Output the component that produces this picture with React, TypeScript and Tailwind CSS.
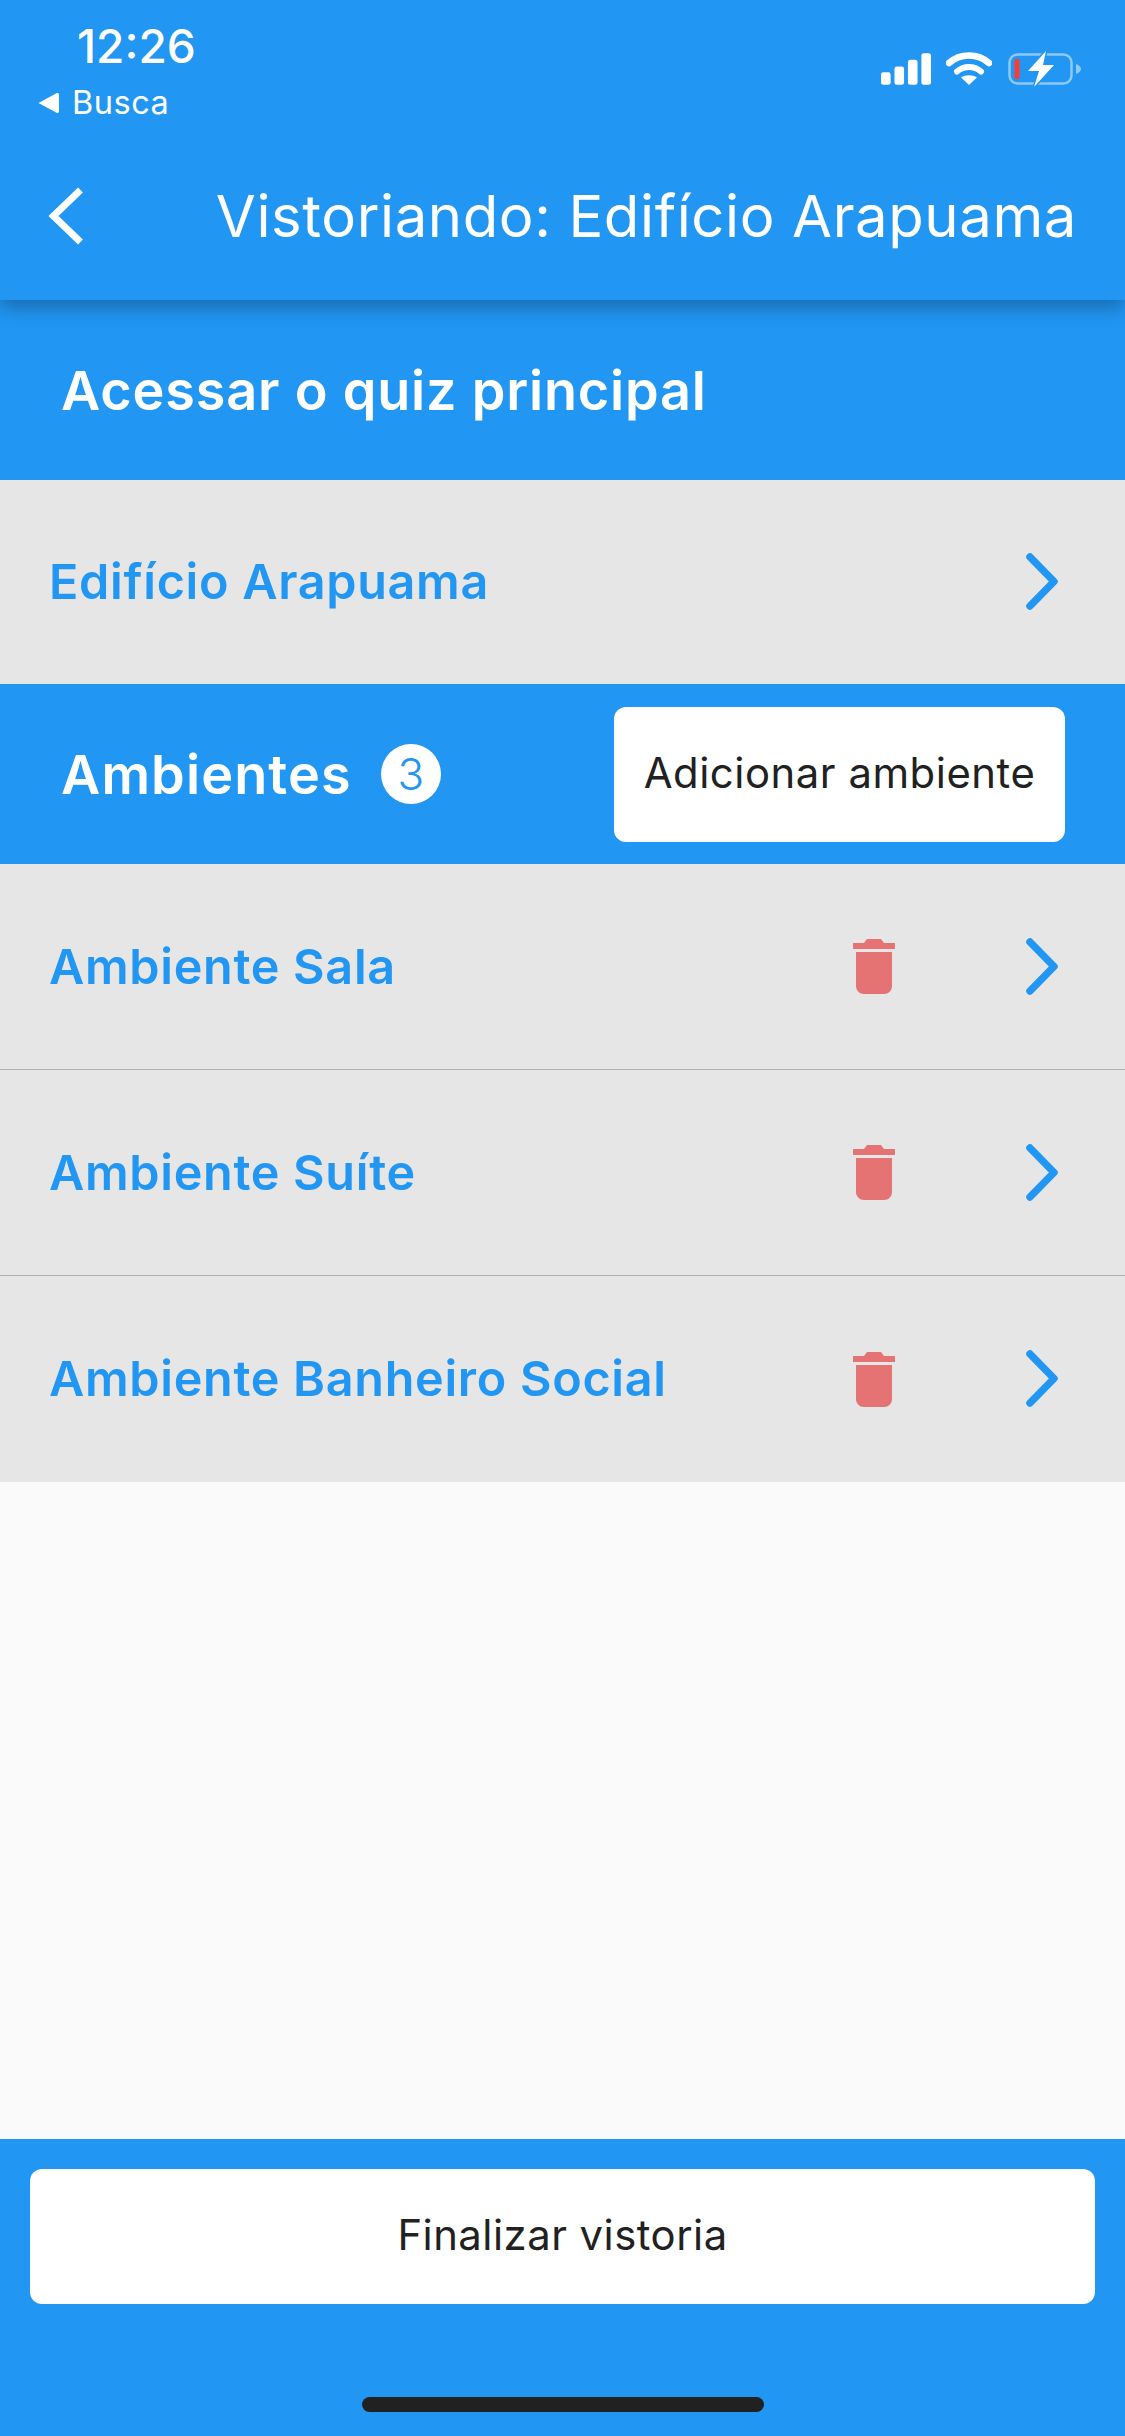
import React from "react";

const Chevron = () => (
  <svg width="36" height="58" viewBox="0 0 36 58" fill="none">
    <path d="M5 4 L29 28.5 L5 53" stroke="#2196f3" strokeWidth="7.5" strokeLinecap="round" strokeLinejoin="round" />
  </svg>
);

const Trash = () => (
  <svg width="42" height="55" viewBox="0 0 42 55" fill="#e57373">
    <path d="M0 4 H11 L14 0 H28 L31 4 H42 V10 H0 Z" />
    <path d="M3 13 H39 V47 C39 51.5 35.5 55 31 55 H11 C6.5 55 3 51.5 3 47 Z" />
  </svg>
);

const Row = ({ label, trash, line, short }: { label: string; trash?: boolean; line?: boolean; short?: boolean }) => (
  <div className={`flex items-center bg-[#e6e6e6] pl-[49px] pr-[64px] ${short ? "h-[204px]" : "h-[206px]"} ${line ? "border-b-[1.5px] border-[#b0b0b0]" : ""}`}>
    <span className="flex-1 pt-[1px] text-[48.5px] font-semibold tracking-[0.7px] text-[#2196f3]">{label}</span>
    {trash && (
      <span className="mr-[130px] flex">
        <Trash />
      </span>
    )}
    <Chevron />
  </div>
);

export default function App() {
  return (
    <div className="flex h-[2436px] w-[1125px] flex-col overflow-hidden bg-[#fafafa] font-['Inter',sans-serif]">
      <header className="relative z-10 h-[300px] bg-[#2196f3] text-white shadow-[0_8px_18px_rgba(0,0,0,0.28)]">
        <div className="flex justify-between">
          <div className="pl-[38px] pt-[20px]">
            <div className="pl-[39px] text-[46px] leading-[53px] font-medium">12:26</div>
            <div className="mt-[10px] flex items-center gap-[12px] text-[32.5px] leading-[40px]">
              <svg width="22" height="22" viewBox="0 0 22 22" fill="white">
                <path d="M0.5 11 L19 1 Q21 0.5 21 3 V19 Q21 21.5 19 21 Z" />
              </svg>
              <span className="tracking-[0.5px]">Busca</span>
            </div>
          </div>
          <div className="flex items-start gap-[15px] pt-[53px] pr-[43px]">
            <svg width="50" height="32" viewBox="0 0 52 33" fill="white">
              <rect x="0" y="20" width="10" height="13" rx="2.5" />
              <rect x="14" y="14" width="10" height="19" rx="2.5" />
              <rect x="28" y="7" width="10" height="26" rx="2.5" />
              <rect x="42" y="0" width="10" height="33" rx="2.5" />
            </svg>
            <svg width="46" height="33" viewBox="0 0 46 33" fill="none" className="-mt-[1px]">
              <path d="M3 11 C14 1 32 1 43 11" stroke="white" strokeWidth="6.5" strokeLinecap="round" />
              <path d="M11 19.5 C18 13.5 28 13.5 35 19.5" stroke="white" strokeWidth="6" strokeLinecap="round" />
              <path d="M23 33 L15 25.5 C19.5 22.5 26.5 22.5 31 25.5 Z" fill="white" />
            </svg>
            <svg width="74" height="36" viewBox="0 0 74 36" fill="none" className="-mt-[2px] ml-[1px]">
              <rect x="1.5" y="3.5" width="62" height="29" rx="8" stroke="#8fc7f6" strokeWidth="2.5" />
              <rect x="6.5" y="8" width="5" height="20" rx="1.5" fill="#ff3b30" />
              <path d="M68 13 Q73 15 73 18 Q73 21 68 23 Z" fill="#8fc7f6" />
              <path d="M38 0 L20 20 H31 L26 36 L46 14 H35 Z" fill="white" stroke="#2196f3" strokeWidth="3" paintOrder="stroke" />
            </svg>
          </div>
        </div>
        <div className="mt-[59px] flex items-center justify-between pl-[44px] pr-[48px]">
          <svg width="44" height="62" viewBox="0 0 44 62" fill="none">
            <path d="M36.5 5 L9.5 31 L36.5 57" stroke="white" strokeWidth="7" />
          </svg>
          <span className="text-[58px] leading-[68px] tracking-[0.6px]">Vistoriando: Edifício Arapuama</span>
        </div>
      </header>

      <div className="flex h-[180px] items-center bg-[#2196f3] pl-[61px]">
        <span className="text-[54px] font-semibold tracking-[0.8px] text-white">Acessar o quiz principal</span>
      </div>

      <Row label="Edifício Arapuama" short />

      <div className="flex h-[180px] items-center justify-between bg-[#2196f3] pl-[61px] pr-[60px]">
        <div className="flex items-center gap-[29px]">
          <span className="text-[54px] font-semibold tracking-[1.1px] text-white">Ambientes</span>
          <span className="flex h-[60px] w-[60px] items-center justify-center rounded-full bg-white text-[44px] font-light text-[#2196f3]">3</span>
        </div>
        <button className="h-[135px] w-[451px] rounded-[12px] bg-white pb-[2px] text-[41.8px] tracking-[0.55px] text-[#212121]">
          Adicionar ambiente
        </button>
      </div>

      <Row label="Ambiente Sala" trash line />
      <Row label="Ambiente Suíte" trash line />
      <Row label="Ambiente Banheiro Social" trash />

      <div className="flex-1" />

      <footer className="flex h-[297px] flex-col items-center bg-[#2196f3] px-[30px] pt-[30px]">
        <button className="h-[135px] w-full rounded-[12px] bg-white pb-[2px] text-[41.8px] tracking-[0.5px] text-[#212121]">
          Finalizar vistoria
        </button>
        <div className="mt-[93px] h-[15px] w-[402px] rounded-full bg-[#212121]" />
      </footer>
    </div>
  );
}
